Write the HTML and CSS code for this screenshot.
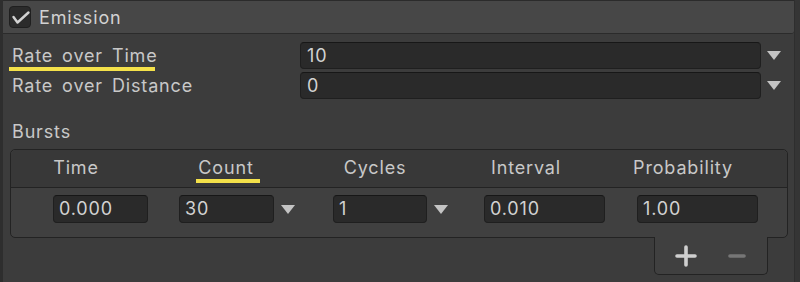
FILE: index.html
```html
<!DOCTYPE html>
<html lang="en">
<head>
    <meta charset="UTF-8">
    <meta name="viewport" content="width=device-width, initial-scale=1.0">
    <title>Emission</title>
    <link rel="stylesheet" href="styles.css">
</head>
<body>
    <div class="inspector">
        <div class="module-header">
            <span class="checkbox">
                <svg width="22" height="22" viewBox="0 0 22 22">
                    <path d="M4.5 11 L8.5 16.5 L19.5 6.5" fill="none" stroke="#d2d2d2" stroke-width="2.4" stroke-linecap="round" stroke-linejoin="round"/>
                </svg>
            </span>
            <span class="module-title">Emission</span>
        </div>

        <div class="module-body">
            <div class="prop-row">
                <span class="prop-label marked">Rate over Time</span>
                <div class="field">10</div>
                <span class="dropdown"><span class="arrow"></span></span>
            </div>
            <div class="prop-row">
                <span class="prop-label">Rate over Distance</span>
                <div class="field">0</div>
                <span class="dropdown"><span class="arrow"></span></span>
            </div>

            <div class="section-label">Bursts</div>

            <div class="bursts">
                <div class="bursts-head">
                    <span class="col-title">Time</span>
                    <span class="col-title"><span class="marked">Count</span></span>
                    <span class="col-title">Cycles</span>
                    <span class="col-title">Interval</span>
                    <span class="col-title">Probability</span>
                </div>
                <div class="bursts-row">
                    <div class="cell"><div class="field small">0.000</div></div>
                    <div class="cell"><div class="field small">30</div><span class="arrow"></span></div>
                    <div class="cell"><div class="field small narrow">1</div><span class="arrow"></span></div>
                    <div class="cell"><div class="field wide">0.010</div></div>
                    <div class="cell"><div class="field wide">1.00</div></div>
                </div>
            </div>

            <div class="bursts-footer">
                <div class="footer-tab">
                    <svg class="tab-btn" width="22" height="22" viewBox="0 0 22 22">
                        <path d="M11 2 V20 M2 11 H20" stroke="#cfcfcf" stroke-width="3.6" stroke-linecap="round"/>
                    </svg>
                    <svg class="tab-btn" width="22" height="22" viewBox="0 0 22 22">
                        <path d="M5 11 H19" stroke="#767676" stroke-width="3.6" stroke-linecap="round"/>
                    </svg>
                </div>
            </div>
        </div>
    </div>
</body>
</html>
```

FILE: styles.css
```css
body {
    margin: 0;
    background: #353535;
    font-family: Inter, "Noto Sans", sans-serif;
    font-size: 18px;
    letter-spacing: 0.85px;
    word-spacing: 3px;
    color: #c8c8c8;
}
.inspector {
    width: 795px;
    height: 282px;
    box-sizing: border-box;
    background: #3c3c3c;
    border-left: 3px solid #2e2e2e;
    border-right: 1px solid #2e2e2e;
}
.module-header {
    height: 32px;
    display: flex;
    align-items: center;
    padding-left: 6px;
    background: #474747;
    border-top: 1px solid #2b2b2b;
    border-bottom: 1px solid #2b2b2b;
    border-bottom-right-radius: 3px;
}
.checkbox {
    width: 22px;
    height: 22px;
    box-sizing: border-box;
    background: #2b2b2b;
    border: 1px solid #1f1f1f;
    border-radius: 4px;
    display: flex;
}
.checkbox svg {
    margin: -1px;
}
.module-title {
    margin-left: 8px;
    color: #d2d2d2;
}
.module-body {
    padding: 8px 6px 0 7px;
}
.prop-row {
    display: flex;
    align-items: center;
    height: 27px;
    margin-bottom: 3px;
}
.prop-label {
    position: relative;
    width: 288px;
    padding-left: 2px;
    line-height: 27px;
}
.marked {
    position: relative;
    display: inline-block;
}
.marked::after {
    content: "";
    position: absolute;
    left: -1px;
    right: 0;
    top: 25px;
    height: 4px;
    background: #f4e14a;
}
.prop-label.marked {
    display: block;
}
.prop-label.marked::after {
    right: auto;
    width: 146px;
}
.field {
    flex: 1;
    height: 27px;
    box-sizing: border-box;
    padding-left: 6px;
    line-height: 25px;
    background: #2a2a2a;
    border: 1px solid #1f1f1f;
    border-top-color: #171717;
    border-radius: 4px;
    color: #d2d2d2;
}
.dropdown {
    width: 27px;
    display: flex;
}
.arrow {
    width: 0;
    height: 0;
    border-left: 7.5px solid transparent;
    border-right: 7.5px solid transparent;
    border-top: 9px solid #c4c4c4;
    margin-left: 6px;
}
.section-label {
    margin-top: 19px;
    padding-left: 2px;
    line-height: 27px;
}
.bursts {
    margin-top: 4px;
    border: 1px solid #232323;
    border-radius: 5px;
    background: #404040;
}
.bursts-head {
    display: grid;
    grid-template-columns: 130px 170px 128px 174px 140px;
    height: 37px;
    line-height: 35px;
    background: #383838;
    border-bottom: 1px solid #232323;
    border-radius: 5px 5px 0 0;
}
.col-title {
    text-align: center;
}
.col-title .marked::after {
    left: -2px;
    right: -6px;
    top: 29px;
}
.bursts-row {
    display: grid;
    grid-template-columns: 126px 154px 151px 153px 121px;
    height: 49px;
    padding: 7px 0 0 42px;
    box-sizing: border-box;
}
.cell {
    display: flex;
    align-items: center;
    height: 28px;
}
.cell .field {
    flex: none;
    height: 28px;
    line-height: 26px;
    padding-left: 5px;
}
.field.small {
    width: 95px;
}
.field.narrow {
    width: 94px;
}
.field.wide {
    width: 121px;
}
.cell .arrow {
    margin-left: 7px;
}
.bursts-footer {
    display: flex;
    justify-content: flex-end;
    padding-right: 20px;
}
.footer-tab {
    width: 114px;
    height: 38px;
    margin-top: -1px;
    box-sizing: border-box;
    display: flex;
    align-items: center;
    justify-content: center;
    gap: 28px;
    background: #404040;
    border: 1px solid #232323;
    border-top: none;
    border-radius: 0 0 5px 5px;
}
```
